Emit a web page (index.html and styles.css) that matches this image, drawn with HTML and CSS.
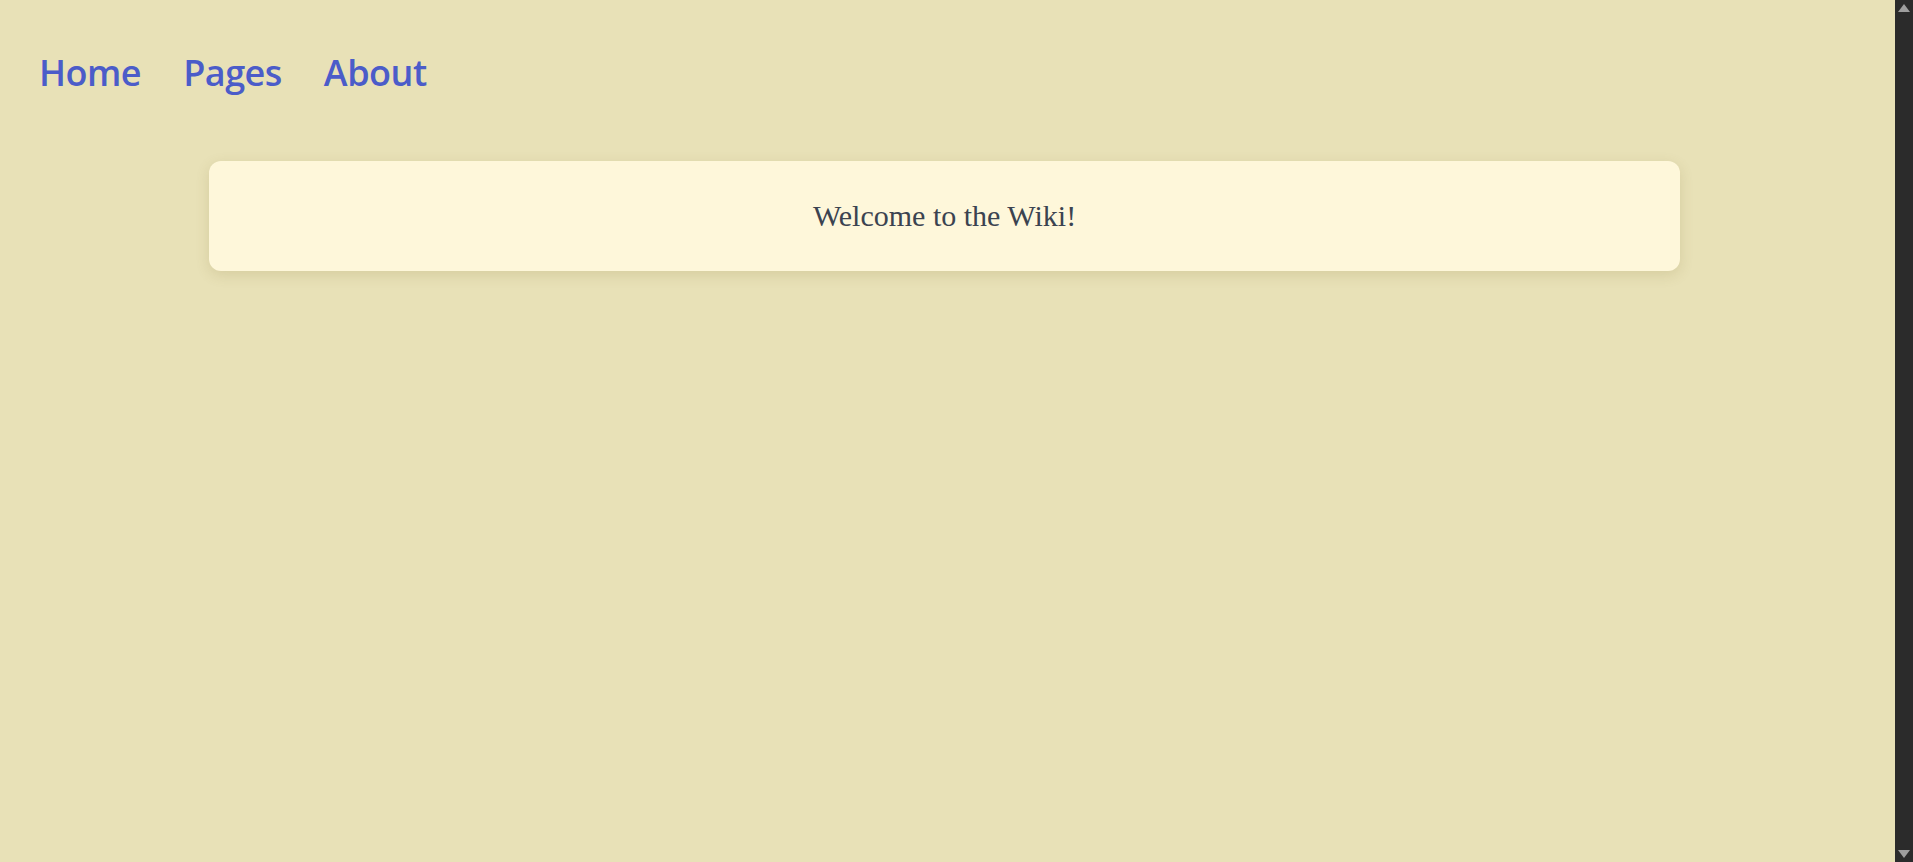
FILE: index.html
```html
<!DOCTYPE html>
<html lang="en">
<head>
<meta charset="utf-8">
<title>Wiki</title>
<link rel="stylesheet" href="styles.css">
</head>
<body>
<div class="page">
  <nav class="nav">
    <a class="nav-link" href="#">Home</a>
    <a class="nav-link" href="#">Pages</a>
    <a class="nav-link" href="#">About</a>
  </nav>
  <main class="main">
    <div class="card">
      <p class="welcome">Welcome to the Wiki!</p>
    </div>
  </main>
</div>
<div class="scrollbar">
  <span class="arrow arrow-up"></span>
  <span class="arrow arrow-down"></span>
</div>
</body>
</html>
```
FILE: styles.css
```css
html, body {
  margin: 0;
  padding: 0;
  height: 100%;
}
body {
  display: flex;
  background: #e8e1b7;
  overflow: hidden;
}
.page {
  flex: 1;
  min-width: 0;
}
.nav {
  display: flex;
  gap: 42px;
  padding: 55px 0 0 39px;
  height: 85px;
  box-sizing: border-box;
}
.nav-link {
  font-family: "Open Sans", "Noto Sans", sans-serif;
  font-weight: 600;
  font-size: 36px;
  line-height: 1;
  color: #4b5cc9;
  text-decoration: none;
  letter-spacing: -0.5px;
}
.main {
  padding: 76px 215px 0 209px;
}
.card {
  height: 110px;
  background: #fef7da;
  border-radius: 12px;
  box-shadow: 0 4px 14px rgba(120, 100, 40, 0.16);
  display: flex;
  align-items: center;
  justify-content: center;
}
.welcome {
  margin: 0;
  font-family: "Liberation Serif", "Times New Roman", serif;
  font-size: 30px;
  color: #3b4350;
}
.scrollbar {
  width: 18px;
  flex: 0 0 18px;
  background: #2b2b2b;
  display: flex;
  flex-direction: column;
  justify-content: space-between;
  align-items: center;
  padding: 4px 0;
  box-sizing: border-box;
}
.arrow {
  width: 0;
  height: 0;
  border-left: 6px solid transparent;
  border-right: 6px solid transparent;
}
.arrow-up {
  border-bottom: 8px solid #9e9e9e;
}
.arrow-down {
  border-top: 8px solid #9e9e9e;
}
```
